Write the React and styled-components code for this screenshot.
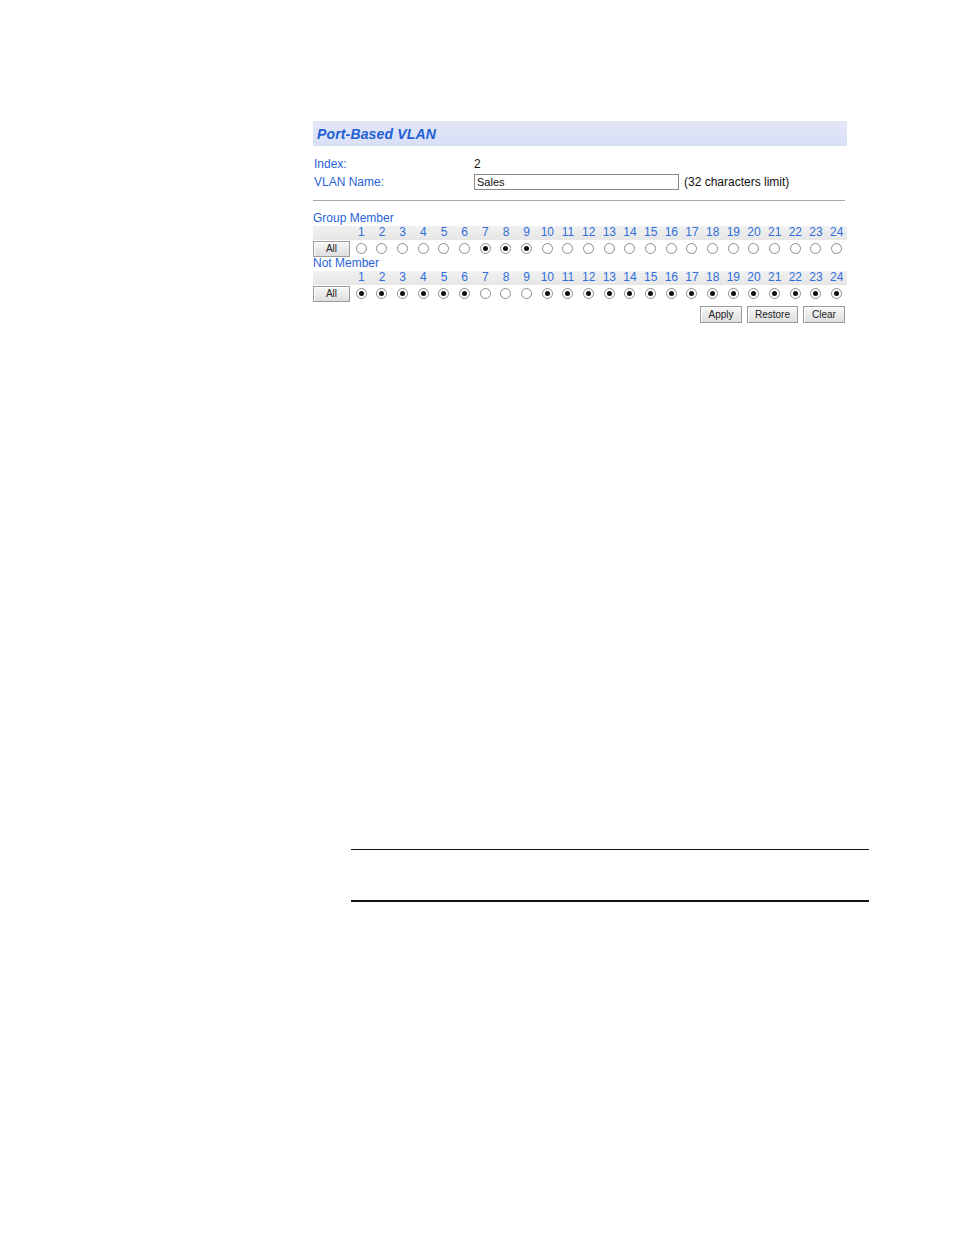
import React from "react";
import styled, { createGlobalStyle } from "styled-components";

const Global = createGlobalStyle`
  html, body { margin: 0; padding: 0; background: #fff; }
  body { font-family: "Liberation Sans", Arial, sans-serif; }
`;

const Page = styled.div`
  width: 954px;
  min-height: 1235px;
  padding-top: 121px;
  box-sizing: border-box;
`;

const Form = styled.div`
  margin-left: 313px;
  width: 534px;
  display: flex;
  flex-direction: column;
`;

const TitleBar = styled.div`
  height: 25px;
  background: linear-gradient(#e2e7f7, #d9dff5);
  display: flex;
  align-items: center;
  padding-left: 4px;
  font-size: 14px;
  font-weight: bold;
  font-style: italic;
  color: #1f5fd4;
  letter-spacing: 0.15px;
`;

const InfoRow = styled.div`
  display: grid;
  grid-template-columns: 161px auto 1fr;
  align-items: center;
  height: ${(p) => p.$h}px;
  margin-top: ${(p) => p.$mt || 0}px;
  font-size: 12px;
`;

const Label = styled.span`
  color: #2a64d6;
  padding-left: 1px;
`;

const Value = styled.span`
  color: #111;
`;

const TextInput = styled.input`
  width: 205px;
  height: 16px;
  box-sizing: border-box;
  border: 1px solid #8a8a8a;
  padding: 0 2px;
  font-family: "Liberation Sans", Arial, sans-serif;
  font-size: 11px;
  color: #111;
  outline: none;
`;

const Hint = styled.span`
  color: #111;
  padding-left: 5px;
`;

const Divider = styled.div`
  height: 1px;
  width: 532px;
  background: #a8a8a8;
  margin-top: 9px;
`;

const SectionLabel = styled.div`
  color: #2a64d6;
  font-size: 12px;
  height: 15px;
  line-height: 15px;
  margin-top: ${(p) => p.$mt}px;
`;

const PortGrid = styled.div`
  display: grid;
  grid-template-columns: 38px repeat(24, 1fr);
`;

const NumBand = styled.div`
  grid-column: 1 / -1;
  display: grid;
  grid-template-columns: 38px repeat(24, 1fr);
  height: 14px;
  background: linear-gradient(#f1f1f1, #e6e6e6);
`;

const Num = styled.span`
  color: #2f6fdc;
  font-size: 12px;
  line-height: 13px;
  text-align: center;
`;

const RadioCell = styled.div`
  height: 17px;
  display: flex;
  align-items: center;
  justify-content: center;
`;

const Radio = styled.span`
  width: 9px;
  height: 9px;
  border-radius: 50%;
  border: 1px solid #8c8c8c;
  background: #fff;
  box-sizing: content-box;
  display: flex;
  align-items: center;
  justify-content: center;
  &::after {
    content: "";
    width: 5px;
    height: 5px;
    border-radius: 50%;
    background: ${(p) => (p.$on ? "#111" : "transparent")};
  }
`;

const AllCell = styled.div`
  height: 17px;
  display: flex;
  align-items: center;
`;

const Btn = styled.button`
  height: ${(p) => p.$h || 17}px;
  width: ${(p) => p.$w}px;
  padding: 0;
  border: 1px solid #9a9a9a;
  border-radius: 0;
  background: linear-gradient(#f7f7f7, #dedede);
  font-family: "Liberation Sans", Arial, sans-serif;
  font-size: 10px;
  color: #222;
  box-shadow: inset 1px 1px 0 #fff;
`;

const Actions = styled.div`
  display: flex;
  justify-content: flex-end;
  gap: 5px;
  margin-top: 4px;
  padding-right: 2px;
`;

const Rules = styled.div`
  margin-left: 351px;
  width: 518px;
  margin-top: 526px;
  display: flex;
  flex-direction: column;
  gap: 50px;
`;

const Rule = styled.div`
  height: 1.4px;
  background: #111;
`;

const ports = Array.from({ length: 24 }, (_, i) => i + 1);
const memberSet = new Set([7, 8, 9]);

function PortTable({ isOn }) {
  return (
    <PortGrid>
      <NumBand>
        <span />
        {ports.map((n) => (
          <Num key={n}>{n}</Num>
        ))}
      </NumBand>
      <AllCell>
        <Btn $w={37} $h={16}>All</Btn>
      </AllCell>
      {ports.map((n) => (
        <RadioCell key={n}>
          <Radio $on={isOn(n)} />
        </RadioCell>
      ))}
    </PortGrid>
  );
}

export default function App() {
  return (
    <Page>
      <Global />
      <Form>
        <TitleBar>Port-Based VLAN</TitleBar>
        <InfoRow $h={16} $mt={10}>
          <Label>Index:</Label>
          <Value>2</Value>
          <span />
        </InfoRow>
        <InfoRow $h={18} $mt={1}>
          <Label>VLAN Name:</Label>
          <TextInput defaultValue="Sales" />
          <Hint>(32 characters limit)</Hint>
        </InfoRow>
        <Divider />
        <SectionLabel $mt={10}>Group Member</SectionLabel>
        <PortTable isOn={(n) => memberSet.has(n)} />
        <SectionLabel $mt={-1}>Not Member</SectionLabel>
        <PortTable isOn={(n) => !memberSet.has(n)} />
        <Actions>
          <Btn $w={42}>Apply</Btn>
          <Btn $w={51}>Restore</Btn>
          <Btn $w={42}>Clear</Btn>
        </Actions>
      </Form>
      <Rules>
        <Rule />
        <Rule />
      </Rules>
    </Page>
  );
}
